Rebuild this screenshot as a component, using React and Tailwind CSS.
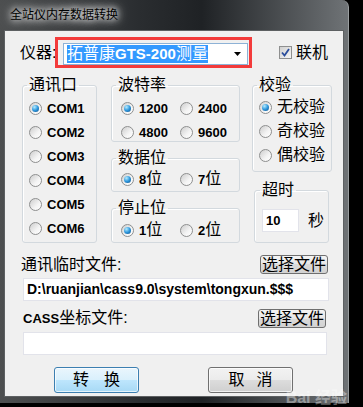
const stack = "font-['Liberation_Sans','Noto_Sans_CJK_SC',sans-serif]"

function Radio({ checked, children, className = '' }) {
  return (
    <div className={`flex items-center h-[18px] ${className}`}>
      <span className="w-[13px] h-[13px] shrink-0 rounded-full border border-[#8e8f8f] bg-[linear-gradient(135deg,#cdcdcd,#f4f4f4_60%,#ffffff)] flex items-center justify-center">
        {checked && (
          <span className="w-[7px] h-[7px] rounded-full bg-[radial-gradient(circle_at_35%_30%,#b5ecff,#2f97dc_50%,#0b4c86)]" />
        )}
      </span>
      <span className="ml-[5px] text-[16px] leading-[18px] text-black whitespace-nowrap">{children}</span>
    </div>
  )
}

function Group({ title, className = '', children }) {
  return (
    <fieldset className={`border border-[#d3d9de] rounded-[3px] shadow-[inset_1px_1px_0_#fff] ${className}`}>
      <legend className="px-[2px] text-[16px] leading-[18px] text-black">{title}</legend>
      {children}
    </fieldset>
  )
}

const B = ({ children }) => <b className="font-bold text-[13px]">{children}</b>

export default function App() {
  return (
    <div className={`relative w-[363px] h-[407px] bg-black overflow-hidden ${stack}`}>
      <div className="w-[349px] h-[403px] rounded-tr-[7px] bg-[linear-gradient(90deg,#4d4f50_0%,#2a2d30_40%,#1f2225_58%,#6f7376_100%)] border-r border-[#9a9ea0] flex flex-col pl-[4px] pr-[4px] pb-[6px]">
        <div className="h-[30px] flex items-center pl-[6px] text-[12px] leading-[14px] text-black [text-shadow:0_0_6px_#fff,0_0_10px_rgba(255,255,255,0.9),0_0_14px_rgba(255,255,255,0.7)]">
          全站仪内存数据转换
        </div>

        <div className="flex-1 bg-[#f0f0f0] border border-[#5d6062] flex flex-col">
          {/* instrument row */}
          <div className="flex items-center h-[31px] mt-[6px]">
            <span className="ml-[15px] w-[35px] shrink-0 whitespace-nowrap text-[16px] leading-[18px]">仪器:</span>
            <div className="w-[197px] h-[31px] shrink-0 border-[3px] border-[#f33b3b] pl-[5px] pr-[1px] pt-[3px]">
              <div className="h-[22px] border border-[#8db2d6] bg-white flex items-center pl-[3px] pr-[6px]">
                <span className="bg-[#3399ff] text-white h-[18px] text-[16px] leading-[18px] whitespace-nowrap">
                  拓普康<b className="font-bold text-[15px]">GTS-200</b>测量
                </span>
                <svg className="ml-auto" width="7" height="4" viewBox="0 0 7 4">
                  <polygon points="0,0 7,0 3.5,4" fill="#000" />
                </svg>
              </div>
            </div>
            <span className="ml-[27px] w-[13px] h-[13px] shrink-0 border border-[#8e8f8f] bg-[linear-gradient(135deg,#d0d0d0,#f6f6f6)] flex items-center justify-center">
              <svg width="9" height="9" viewBox="0 0 9 9">
                <path d="M1 4.5 L3.5 7.5 L8 1" stroke="#2a4d9c" strokeWidth="1.8" fill="none" />
              </svg>
            </span>
            <span className="ml-[4px] text-[16px] leading-[18px] whitespace-nowrap">联机</span>
          </div>

          {/* groups */}
          <div className="flex items-start mt-[8px] ml-[17px]">
            <Group title="通讯口" className="w-[75px] pl-[4px] pt-[5px] pb-[5px]">
              <div className="flex flex-col gap-[6px] pl-[2px]">
                {[1, 2, 3, 4, 5, 6].map((n) => (
                  <Radio key={n} checked={n === 1}>
                    <B>COM{n}</B>
                  </Radio>
                ))}
              </div>
            </Group>

            <div className="ml-[14px] w-[129px] flex flex-col">
              <Group title="波特率" className="pl-[4px] pt-[5px] pb-0">
                <div className="grid grid-cols-[59px_59px] gap-y-[6px] pl-[5px]">
                  <Radio checked><B>1200</B></Radio>
                  <Radio><B>2400</B></Radio>
                  <Radio><B>4800</B></Radio>
                  <Radio><B>9600</B></Radio>
                </div>
              </Group>
              <Group title="数据位" className="mt-[7px] pl-[4px] pt-[3px] pb-[3px]">
                <div className="grid grid-cols-[59px_59px] pl-[5px]">
                  <Radio checked><B>8</B>位</Radio>
                  <Radio><B>7</B>位</Radio>
                </div>
              </Group>
              <Group title="停止位" className="mt-[7px] pl-[4px] pt-[4px] pb-[3px]">
                <div className="grid grid-cols-[59px_59px] pl-[5px]">
                  <Radio checked><B>1</B>位</Radio>
                  <Radio><B>2</B>位</Radio>
                </div>
              </Group>
            </div>

            <div className="ml-[12px] w-[80px] flex flex-col">
              <Group title="校验" className="pl-[4px] pt-[4px] pb-[7px]">
                <div className="flex flex-col gap-[6px] pl-[2px]">
                  <Radio checked>无校验</Radio>
                  <Radio>奇校验</Radio>
                  <Radio>偶校验</Radio>
                </div>
              </Group>
              <Group title="超时" className="mt-[9px] ml-[2px] w-[75px] pl-[5px] pt-[10px] pb-[10px]">
                <div className="flex items-center pl-[2px]">
                  <div className="w-[37px] h-[23px] bg-white border border-[#e2e3ea] flex items-center pl-[3px] text-[13px] font-bold">
                    10
                  </div>
                  <span className="ml-[9px] text-[16px] leading-[18px]">秒</span>
                </div>
              </Group>
            </div>
          </div>

          {/* file rows */}
          <div className="flex items-center justify-between h-[19px] mt-[12px] pl-[16px] pr-[15px]">
            <span className="text-[16px] leading-[18px]">通讯临时文件:</span>
            <button className="w-[68px] h-[19px] border border-[#6f6f6f] rounded-[3px] bg-[linear-gradient(#f4f4f4,#e6e6e6_50%,#dadada_50%,#d2d2d2)] text-[16px] leading-[17px] whitespace-nowrap">
              选择文件
            </button>
          </div>
          <div className="ml-[18px] mt-[4px] w-[306px] h-[23px] bg-white border border-[#e2e3ea] flex items-center pl-[3px] text-[14px] font-bold whitespace-nowrap overflow-hidden">
            {'D:\\ruanjian\\cass9.0\\system\\tongxun.$$$'}
          </div>

          <div className="flex items-center justify-between h-[19px] mt-[8px] pl-[18px] pr-[17px]">
            <span className="text-[16px] leading-[18px]"><B>CASS</B>坐标文件:</span>
            <button className="w-[68px] h-[19px] border border-[#6f6f6f] rounded-[3px] bg-[linear-gradient(#f4f4f4,#e6e6e6_50%,#dadada_50%,#d2d2d2)] text-[16px] leading-[17px] whitespace-nowrap">
              选择文件
            </button>
          </div>
          <div className="ml-[18px] mt-[4px] w-[304px] h-[23px] bg-white border border-[#e2e3ea]" />

          <div className="flex items-center mt-[12px] ml-[49px]">
            <button className="w-[85px] h-[26px] rounded-[3px] border border-[#3c7fb1] bg-[linear-gradient(#eaf6fd,#d9f0fc_50%,#bee6fd_50%,#a7d9f5)] shadow-[inset_0_0_0_1px_rgba(255,255,255,0.7)] flex items-center justify-center gap-[15px] text-[16px] leading-[18px]">
              <span>转</span>
              <span>换</span>
            </button>
            <button className="ml-[69px] w-[85px] h-[26px] rounded-[3px] border border-[#707070] bg-[linear-gradient(#f2f2f2,#ebebeb_50%,#dddddd_50%,#cfcfcf)] shadow-[inset_0_0_0_1px_rgba(255,255,255,0.7)] flex items-center justify-center gap-[12px] text-[16px] leading-[18px]">
              <span>取</span>
              <span>消</span>
            </button>
          </div>
        </div>
      </div>
      <div className="absolute right-[16px] bottom-0 text-[16px] font-bold leading-[18px] text-white/40">
        Bai 经验
      </div>
    </div>
  )
}
